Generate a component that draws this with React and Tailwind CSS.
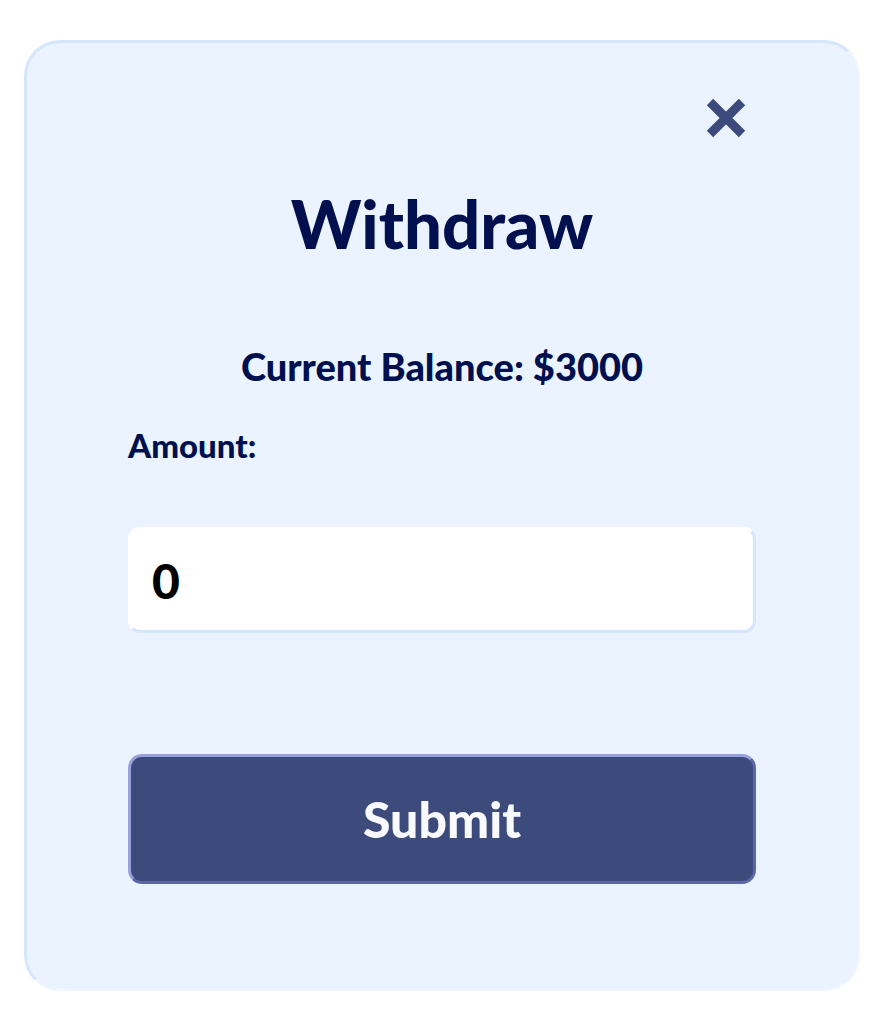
import React, { useState } from 'react';

const CloseIcon = () => (
    <svg width="40" height="40" viewBox="0 0 40 40" className="block">
        <path d="M4 4 L36 36 M36 4 L4 36" stroke="#3c4a7c" strokeWidth="9" strokeLinecap="butt" fill="none" />
    </svg>
);

const App = () => {
    const [amount, setAmount] = useState('0');

    return (
        <div className="min-h-screen bg-white pt-10 pl-6" style={{ fontFamily: 'Lato, "Noto Sans", sans-serif' }}>
            <div className="w-[836px] rounded-[36px] border-[3px] border-t-[#d6e6fe] border-l-[#d6e6fe] border-b-[#eef5ff] border-r-[#eef5ff] bg-[#eaf3ff] pb-[104px]">
                <div className="flex justify-end pr-[111px] pt-[55px]">
                    <button type="button" aria-label="Close">
                        <CloseIcon />
                    </button>
                </div>

                <h2 className="mt-[52px] text-center text-[67px] font-black leading-none text-[#00104f]">Withdraw</h2>

                <p className="mt-[90px] text-center text-[38px] font-black leading-none text-[#00104f]">
                    Current Balance: $3000
                </p>

                <div className="mx-auto w-[628px]">
                    <label className="mt-[44px] block text-[33px] font-black leading-none text-[#00104f]">Amount:</label>

                    <input
                        type="text"
                        value={amount}
                        onChange={(e) => setAmount(e.target.value.replace(/[^\d.]/g, ''))}
                        className="mt-[65px] block h-[106px] w-full rounded-[12px] border-[3px] border-t-white border-l-white border-b-[#d6e6fe] border-r-[#d6e6fe] bg-white px-[21px] text-[48px] font-black text-black outline-none"
                    />

                    <button
                        type="button"
                        className="mt-[121px] block h-[130px] w-full rounded-[14px] border-[3px] border-t-[#97a1dd] border-l-[#97a1dd] border-b-[#5c68a6] border-r-[#5c68a6] bg-[#3c4a7c] text-[50px] font-black text-[#f8faff]"
                    >
                        Submit
                    </button>
                </div>
            </div>
        </div>
    );
};

export default App;
